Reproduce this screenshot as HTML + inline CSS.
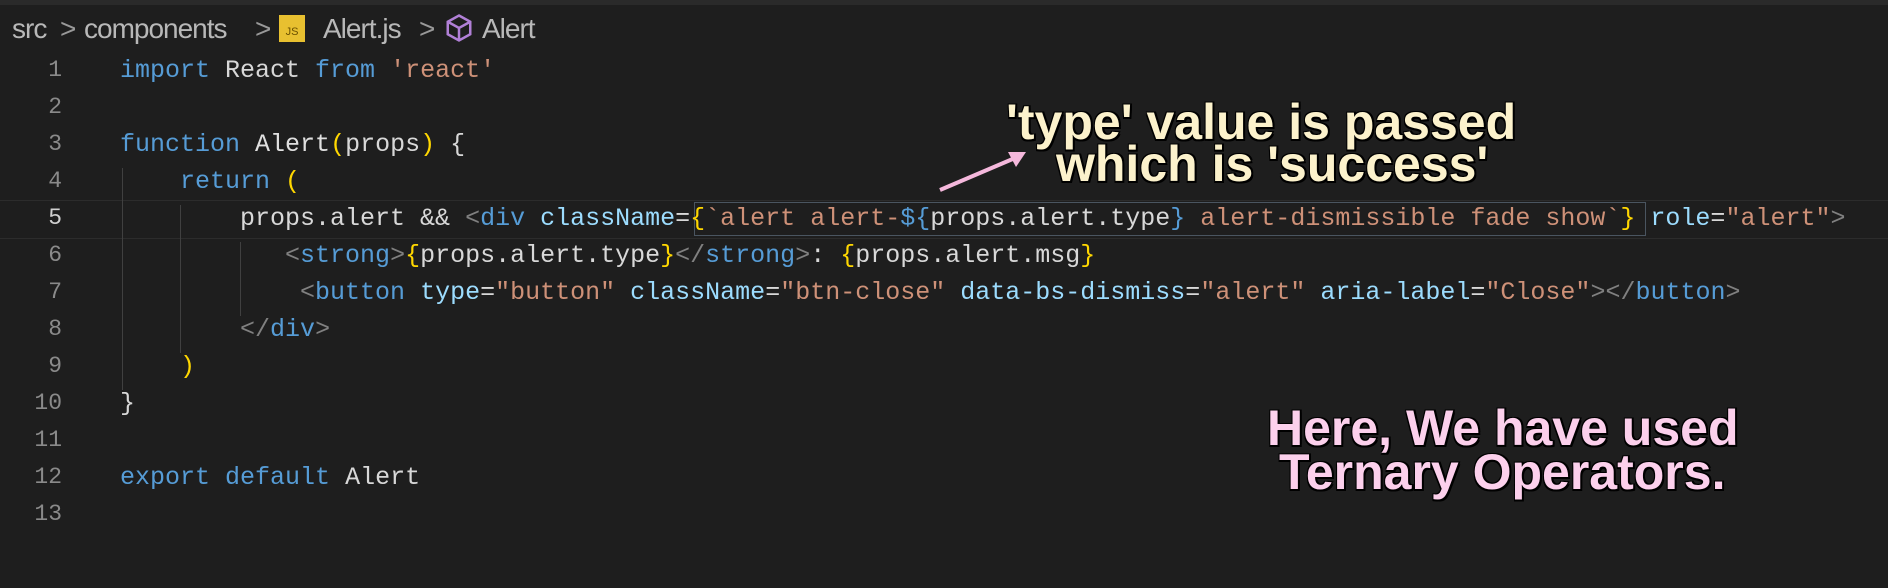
<!DOCTYPE html>
<html><head><meta charset="utf-8"><style>
body{margin:0;width:1888px;height:588px;background:#1e1e1e;overflow:hidden;position:relative;font-family:"Liberation Mono",monospace}
.top{position:absolute;left:0;top:0;width:1888px;height:5px;background:#2a2a2a}
.b{position:absolute;top:12px;font:28px "Liberation Sans",sans-serif;color:#b8b8b8;white-space:nowrap;letter-spacing:-1px;line-height:34px}
.ln{position:absolute;left:0;width:62px;text-align:right;color:#8a8a8a;font-size:23px;line-height:37px}
.c{position:absolute;left:120px;font-size:25px;letter-spacing:0;line-height:37px;white-space:pre;color:#d8d8d8}
.k{color:#569cd6}.s{color:#ce9178}.v{color:#9cdcfe}.g{color:#808080}.y{color:#ffd700}.f{color:#e0e0e0}
.guide{position:absolute;width:1px;background:#404040}
.ann{position:absolute;font-family:"Liberation Sans Narrow","Liberation Sans",sans-serif;font-weight:bold;white-space:nowrap;text-shadow:2px 2px 0 #000,-1px -1px 0 #000,2px -1px 0 #000,-1px 2px 0 #000}
</style></head><body>
<div class="top"></div>
<div class="b" style="left:12px">src</div>
<div class="b" style="left:60px;color:#999">&gt;</div>
<div class="b" style="left:84px">components</div>
<div class="b" style="left:255px;color:#999">&gt;</div>
<div style="position:absolute;left:279px;top:15px;width:26px;height:27px;background:#e8c030;color:#6a5000;font:11px 'Liberation Sans',sans-serif;text-align:center;line-height:34px">JS</div>
<div class="b" style="left:323px">Alert.js</div>
<div class="b" style="left:419px;color:#999">&gt;</div>
<svg style="position:absolute;left:444px;top:13px" width="30" height="30" viewBox="0 0 24 24"><path d="M12 2 L21 7 L21 17 L12 22 L3 17 L3 7 Z M3 7 L12 12 L21 7 M12 12 L12 22" fill="none" stroke="#b180d7" stroke-width="2"/></svg>
<div class="b" style="left:482px">Alert</div>

<div style="position:absolute;left:0;top:200px;width:1888px;height:37px;border-top:1px solid #2c2c2c;border-bottom:1px solid #2c2c2c"></div>
<div style="position:absolute;left:694px;top:202px;width:950px;height:32px;border:1px solid #4a5560"></div>

<div class="guide" style="left:122px;top:168px;height:222px"></div>
<div class="guide" style="left:180px;top:205px;height:148px"></div>
<div class="guide" style="left:240px;top:242px;height:74px"></div>

<div class="ln" style="top:52px">1</div><div class="ln" style="top:89px">2</div><div class="ln" style="top:126px">3</div><div class="ln" style="top:163px">4</div><div class="ln" style="top:200px;color:#d0d0d0">5</div><div class="ln" style="top:237px">6</div><div class="ln" style="top:274px">7</div><div class="ln" style="top:311px">8</div><div class="ln" style="top:348px">9</div><div class="ln" style="top:385px">10</div><div class="ln" style="top:422px">11</div><div class="ln" style="top:459px">12</div><div class="ln" style="top:496px">13</div>

<div class="c" style="top:52px"><span class="k">import</span> React <span class="k">from</span> <span class="s">'react'</span></div>
<div class="c" style="top:126px"><span class="k">function</span> <span class="f">Alert</span><span class="y">(</span>props<span class="y">)</span> {</div>
<div class="c" style="top:163px">    <span class="k">return</span> <span class="y">(</span></div>
<div class="c" style="top:200px">        props.alert &amp;&amp; <span class="g">&lt;</span><span class="k">div</span> <span class="v">className</span>=<span class="y">{</span><span class="s">`alert alert-</span><span class="k">${</span>props.alert.type<span class="k">}</span><span class="s"> alert-dismissible fade show`</span><span class="y">}</span> <span class="v">role</span>=<span class="s">"alert"</span><span class="g">&gt;</span></div>
<div class="c" style="top:237px">           <span class="g">&lt;</span><span class="k">strong</span><span class="g">&gt;</span><span class="y">{</span>props.alert.type<span class="y">}</span><span class="g">&lt;/</span><span class="k">strong</span><span class="g">&gt;</span>: <span class="y">{</span>props.alert.msg<span class="y">}</span></div>
<div class="c" style="top:274px">            <span class="g">&lt;</span><span class="k">button</span> <span class="v">type</span>=<span class="s">"button"</span> <span class="v">className</span>=<span class="s">"btn-close"</span> <span class="v">data-bs-dismiss</span>=<span class="s">"alert"</span> <span class="v">aria-label</span>=<span class="s">"Close"</span><span class="g">&gt;&lt;/</span><span class="k">button</span><span class="g">&gt;</span></div>
<div class="c" style="top:311px">        <span class="g">&lt;/</span><span class="k">div</span><span class="g">&gt;</span></div>
<div class="c" style="top:348px">    <span class="y">)</span></div>
<div class="c" style="top:385px">}</div>
<div class="c" style="top:459px"><span class="k">export</span> <span class="k">default</span> Alert</div>

<svg style="position:absolute;left:0;top:0" width="1888" height="588"><line x1="940" y1="190" x2="1015" y2="158" stroke="#f5b8dc" stroke-width="4"/><path d="M1026 152 L1008 152 L1016 167 Z" fill="#f5b8dc"/></svg>

<div class="ann" style="left:1006px;top:96px;font-size:50px;color:#fcf2cc;line-height:52px">'type' value is passed</div>
<div class="ann" style="left:1056px;top:138px;font-size:50px;color:#fcf2cc;line-height:52px">which is 'success'</div>
<div class="ann" style="left:1267px;top:402px;font-size:50px;color:#fcd0ec;line-height:52px">Here, We have used</div>
<div class="ann" style="left:1279px;top:446px;font-size:50px;color:#fcd0ec;line-height:52px">Ternary Operators.</div>
</body></html>
